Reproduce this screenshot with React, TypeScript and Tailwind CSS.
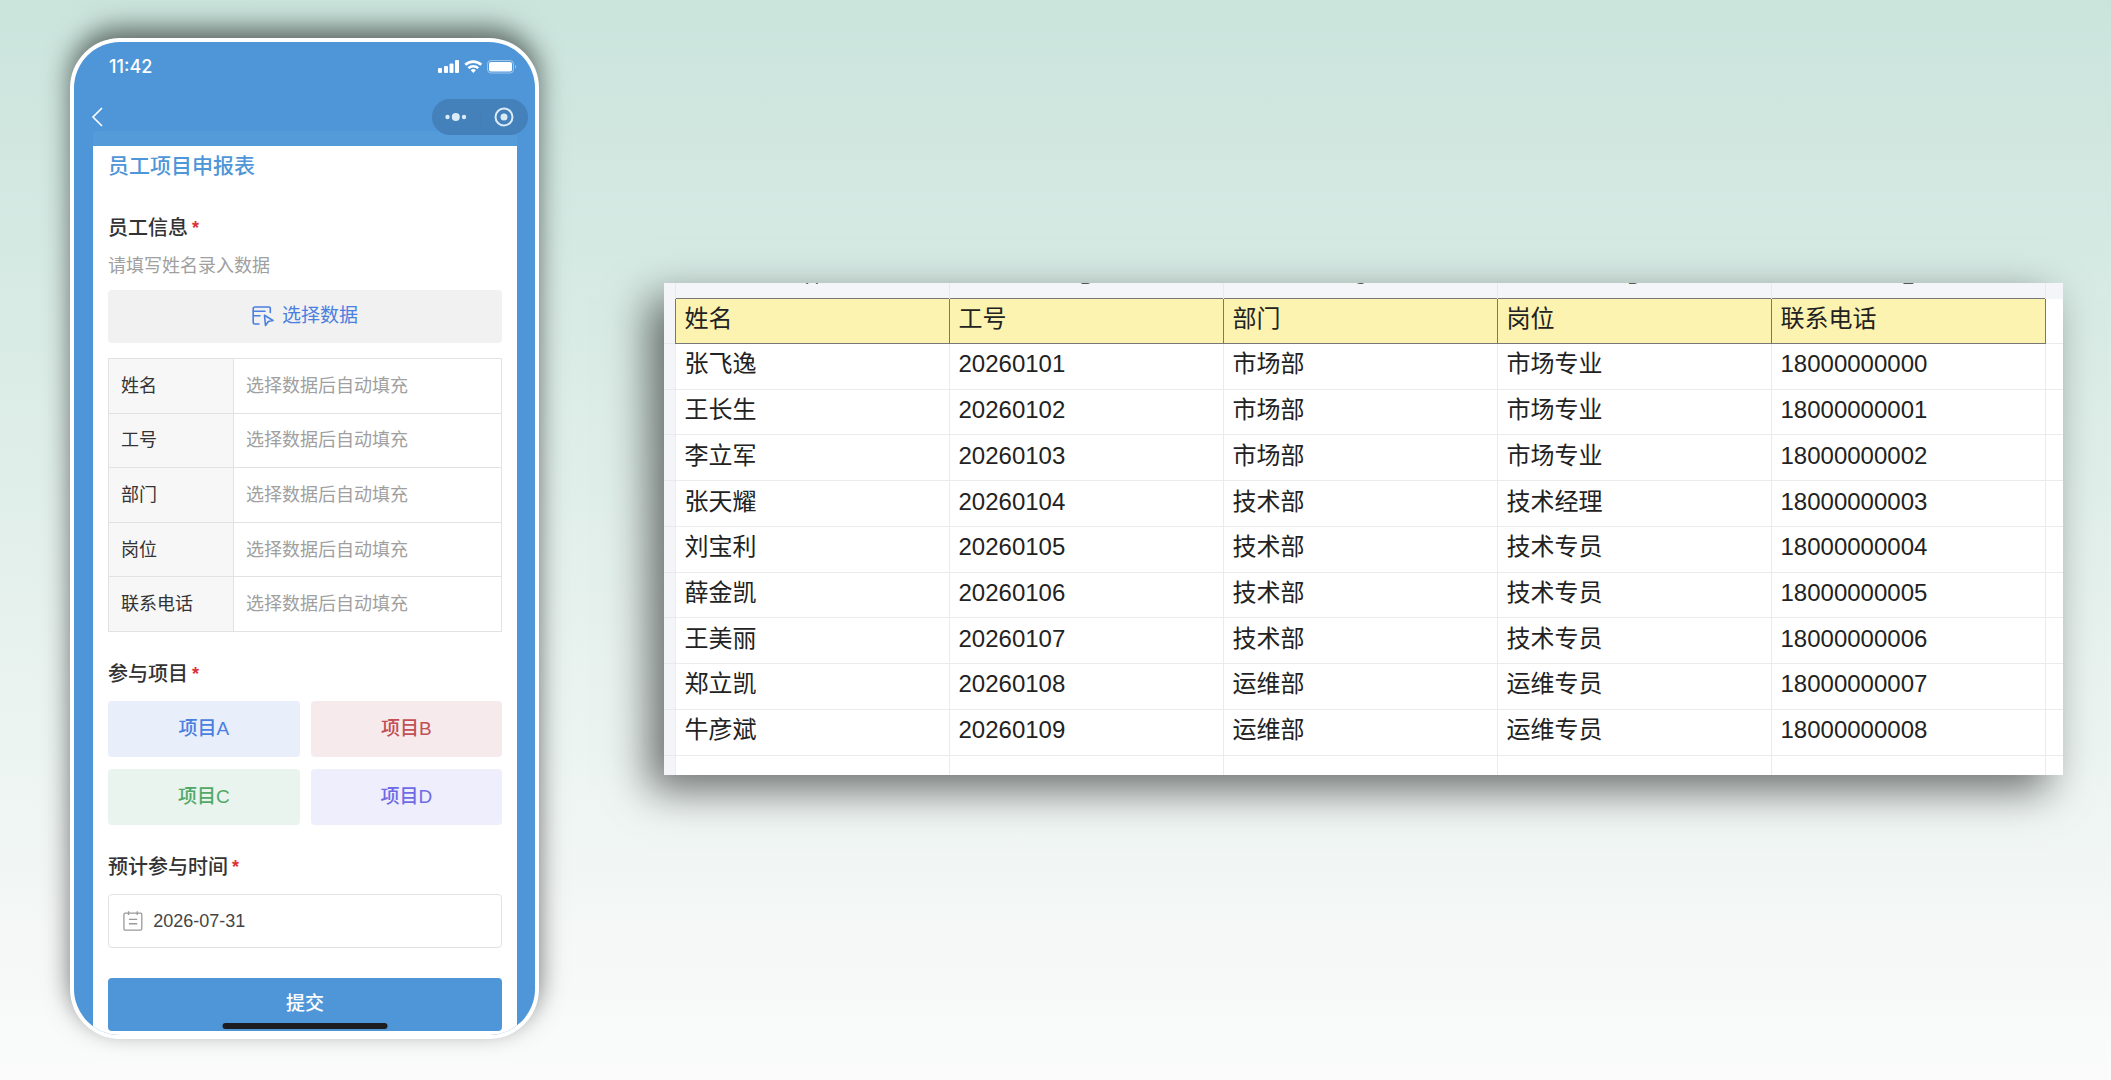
import { useState } from "react";
import { clsx } from "clsx";

const columns = ["姓名", "工号", "部门", "岗位", "联系电话"];
const columnLetters = ["A", "B", "C", "D", "E"];

const rows = [
  ["张飞逸", "20260101", "市场部", "市场专业", "18000000000"],
  ["王长生", "20260102", "市场部", "市场专业", "18000000001"],
  ["李立军", "20260103", "市场部", "市场专业", "18000000002"],
  ["张天耀", "20260104", "技术部", "技术经理", "18000000003"],
  ["刘宝利", "20260105", "技术部", "技术专员", "18000000004"],
  ["薛金凯", "20260106", "技术部", "技术专员", "18000000005"],
  ["王美丽", "20260107", "技术部", "技术专员", "18000000006"],
  ["郑立凯", "20260108", "运维部", "运维专员", "18000000007"],
  ["牛彦斌", "20260109", "运维部", "运维专员", "18000000008"],
];

const projects = [
  { name: "项目A", className: "bg-[#e8effb] text-[#4a7fe0]" },
  { name: "项目B", className: "bg-[#f7eaec] text-[#c24f55]" },
  { name: "项目C", className: "bg-[#e9f4ee] text-[#52a865]" },
  { name: "项目D", className: "bg-[#eeeefc] text-[#6f6be6]" },
];

function StatusIcons() {
  return (
    <svg width="80" height="16" viewBox="0 0 80 16" fill="white" aria-hidden="true">
      <rect x="0" y="9" width="4" height="5" rx="1" />
      <rect x="6" y="7" width="4" height="7" rx="1" />
      <rect x="11.500" y="4.500" width="4" height="9.500" rx="1" />
      <rect x="17" y="1" width="4" height="13" rx="1" />
      <path d="M27.300 5.800a11.600 11.600 0 0 1 16 0" fill="none" stroke="white" strokeWidth="2.600" />
      <path d="M30.400 9.200a7 7 0 0 1 9.800 0" fill="none" stroke="white" strokeWidth="2.400" />
      <path d="M35.300 14l-2.600-2.700a3.800 3.800 0 0 1 5.200 0z" />
      <rect x="49.500" y="1.500" width="26" height="12.500" rx="3.500" fill="none" stroke="white" strokeOpacity="0.45" />
      <rect x="51" y="3" width="23" height="9.500" rx="2" />
      <path d="M77 5.800q2 2 0 4z" fillOpacity="0.5" />
    </svg>
  );
}

function PickIcon() {
  return (
    <svg
      width="22"
      height="21"
      viewBox="0 0 22 21"
      fill="none"
      stroke="currentColor"
      strokeWidth="1.6"
      strokeLinejoin="round"
      strokeLinecap="round"
      aria-hidden="true"
    >
      <path d="M18.300 6.500V2.200A1.200 1.200 0 0 0 17 1H3A1.800 1.800 0 0 0 1.200 2.800V16.500A1.500 1.500 0 0 0 2.700 18H7" />
      <path d="M1.500 5.300H13M1.500 9.800H8" />
      <path d="M12.500 9.300l8.500 5.200-4.700 1-2.800 4z" />
    </svg>
  );
}

function DateIcon() {
  return (
    <svg width="22" height="22" viewBox="0 0 22 22" fill="none" stroke="#999" strokeWidth="1.4" aria-hidden="true">
      <rect x="1" y="2.500" width="19.500" height="18.500" rx="1.500" />
      <path d="M6 0.500v4M15.500 0.500v4M6.500 9.200h9M6.500 14h9" />
    </svg>
  );
}

function FieldLabel({ text, htmlFor }: { text: string; htmlFor?: string }) {
  return (
    <label htmlFor={htmlFor} className="mt-[27px] flex items-center gap-1 text-xl leading-[30px] font-medium text-[#333]">
      {text}
      <span className="text-lg leading-[26px] font-bold text-[#e02f36]">*</span>
    </label>
  );
}

function PhoneForm() {
  const [selected, setSelected] = useState<string[]>([]);
  const [date, setDate] = useState("2026-07-31");

  const toggle = (name: string) =>
    setSelected((prev) => (prev.includes(name) ? prev.filter((p) => p !== name) : [...prev, name]));

  return (
    <section className="w-[469px] shrink-0 rounded-[50px] bg-white p-1 shadow-[0_-10px_26px_rgba(0,0,0,0.55)]">
      <div className="relative overflow-hidden rounded-[46px] bg-[#4f96d8]">
        <div className="flex h-[50px] items-center justify-between pr-[17px] pl-[35px]">
          <span className="font-[Inter,sans-serif] text-lg font-medium text-white">11:42</span>
          <StatusIcons />
        </div>
        <div className="relative z-10 flex h-[39px] items-start justify-between pt-[7px] pr-[7px] pl-[17px]">
          <button type="button" aria-label="返回" className="flex h-9 items-center">
            <svg width="12" height="20" viewBox="0 0 12 20" fill="none" stroke="white" strokeWidth="1.600">
              <path d="M11 1L2 10l9 9" />
            </svg>
          </button>
          <div className="flex h-9 w-24 items-center rounded-full bg-[#4480b9]">
            <button type="button" aria-label="更多" className="flex h-full flex-1 items-center justify-center">
              <svg width="22" height="10" viewBox="0 0 22 10" fill="#dcebf8">
                <circle cx="2.500" cy="5" r="2.200" />
                <circle cx="10.800" cy="5" r="4" />
                <circle cx="19" cy="5" r="2.200" />
              </svg>
            </button>
            <span className="h-5 w-px bg-[#437eb6]" />
            <button type="button" aria-label="关闭" className="flex h-full flex-1 items-center justify-center">
              <svg width="20" height="20" viewBox="0 0 20 20">
                <circle cx="10" cy="10" r="8.500" fill="none" stroke="#dcebf8" strokeWidth="2" />
                <circle cx="10" cy="10" r="3.500" fill="#dcebf8" />
              </svg>
            </button>
          </div>
        </div>
        <form className="mr-[18px] ml-[19px]" onSubmit={(e) => e.preventDefault()}>
          <div className="h-[15px] rounded-t bg-[#549bda]" />
          <div className="bg-white px-[15px] pb-1">
            <h1 className="text-[21px] leading-10 font-medium text-[#4f96d8]">员工项目申报表</h1>

            <FieldLabel text="员工信息" />
            <p className="mt-2.5 text-lg leading-[26px] text-[#a0a0a0]">请填写姓名录入数据</p>
            <button
              type="button"
              className="mt-[11px] flex h-[53px] w-full items-center justify-center gap-2 rounded bg-[#f1f1f1] text-[19px] text-[#4a7fe0]"
            >
              <PickIcon />
              选择数据
            </button>

            <table className="mt-[15px] h-[274px] w-full table-fixed border-collapse text-lg">
              <tbody>
                {columns.map((name) => (
                  <tr key={name}>
                    <th
                      scope="row"
                      className="w-[125px] border border-[#e2e2e2] bg-[#f7f7f7] pl-3 text-left font-normal text-[#333]"
                    >
                      {name}
                    </th>
                    <td className="border border-[#e2e2e2] pl-3">
                      <input
                        readOnly
                        aria-label={name}
                        placeholder="选择数据后自动填充"
                        className="w-full outline-none placeholder:text-[#a0a0a0]"
                      />
                    </td>
                  </tr>
                ))}
              </tbody>
            </table>

            <FieldLabel text="参与项目" />
            <div className="mt-3 grid grid-cols-2 gap-x-[11px] gap-y-3">
              {projects.map((project) => (
                <button
                  key={project.name}
                  type="button"
                  aria-pressed={selected.includes(project.name)}
                  onClick={() => toggle(project.name)}
                  className={clsx(
                    "h-14 rounded text-[19px] font-medium",
                    project.className,
                    selected.includes(project.name) && "ring-2",
                  )}
                >
                  {project.name}
                </button>
              ))}
            </div>

            <FieldLabel text="预计参与时间" htmlFor="join-date" />
            <div className="mt-3 flex h-[54px] items-center gap-2.5 rounded border border-[#e2e2e2] px-3.5">
              <DateIcon />
              <input
                id="join-date"
                value={date}
                onChange={(e) => setDate(e.target.value)}
                className="w-full text-lg text-[#444] outline-none"
              />
            </div>

            <button
              type="submit"
              className="mt-[30px] h-[53px] w-full rounded bg-[#4f96d8] text-[19px] font-medium text-white"
            >
              提交
            </button>
          </div>
        </form>
        {/* home indicator */}
        <span className="absolute bottom-1.5 left-1/2 h-1.5 w-[165px] -translate-x-1/2 rounded-full bg-[#1d1d1f]" />
      </div>
    </section>
  );
}

function Sheet() {
  return (
    <section className="mt-[245px] min-w-0 flex-1 bg-white shadow-[-15px_15px_40px_rgba(0,0,0,0.55)]">
      <table className="h-[492px] w-full table-fixed border-collapse text-2xl text-[#222]">
        <colgroup>
          <col className="w-[11px]" />
          {columnLetters.map((letter) => (
            <col key={letter} />
          ))}
          <col className="w-[18px]" />
        </colgroup>
        <thead>
          {/* the letter row is scrolled almost out of view */}
          <tr className="h-[15px] bg-[#f4f5f9] text-lg text-[#555]">
            <td />
            {columnLetters.map((letter) => (
              <th key={letter} className="border-x border-[#e8e9ed] p-0 font-normal">
                <div className="h-[15px] overflow-hidden">
                  <span className="-mt-3.5 block leading-[18px]">{letter}</span>
                </div>
              </th>
            ))}
            <td />
          </tr>
          <tr className="h-[45px]">
            <td className="bg-[#f4f5f9]" />
            {columns.map((name) => (
              <th key={name} className="border border-[#777] bg-[#fdf3b0] pb-1 pl-[9px] text-left font-normal">
                {name}
              </th>
            ))}
            <td />
          </tr>
        </thead>
        <tbody>
          {rows.map((row) => (
            <tr key={row[1]}>
              <td className="border-y border-[#e8e9ed] bg-[#f4f5f9]" />
              {row.map((cell) => (
                <td key={cell} className="border border-[#ebebeb] pb-1 pl-[9px]">
                  {cell}
                </td>
              ))}
              <td className="border-y border-[#ebebeb]" />
            </tr>
          ))}
          <tr className="h-5">
            <td className="bg-[#f4f5f9]" />
            {columnLetters.map((letter) => (
              <td key={letter} className="border-x border-[#ebebeb]" />
            ))}
            <td />
          </tr>
        </tbody>
      </table>
    </section>
  );
}

export default function App() {
  return (
    <main className="flex min-h-screen items-start gap-[125px] bg-linear-to-b from-[#cae4dc] to-[#fbfbfb] pt-[38px] pr-12 pb-10 pl-[70px] font-['Liberation_Sans','Noto_Sans_CJK_SC',sans-serif]">
      <PhoneForm />
      <Sheet />
    </main>
  );
}
